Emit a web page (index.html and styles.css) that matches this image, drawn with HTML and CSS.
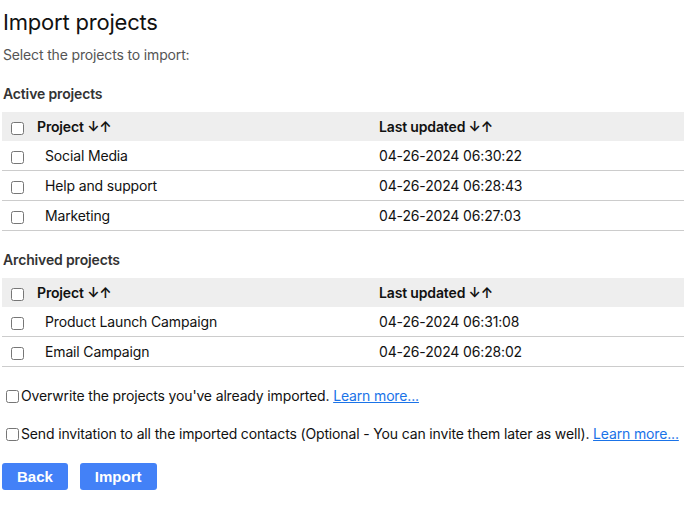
FILE: index.html
```html
<!DOCTYPE html>
<html lang="en">
<head>
    <meta charset="UTF-8">
    <title>Import projects</title>
    <link rel="stylesheet" href="styles.css">
</head>
<body>
    <h1>Import projects</h1>
    <p class="intro">Select the projects to import:</p>

    <h3>Active projects</h3>
    <table class="projects">
        <thead>
            <tr>
                <th class="check"><input type="checkbox"></th>
                <th class="name">Project ↓↑</th>
                <th class="date">Last updated ↓↑</th>
            </tr>
        </thead>
        <tbody>
            <tr><td class="check"><input type="checkbox"></td><td class="name">Social Media</td><td class="date">04-26-2024 06:30:22</td></tr>
            <tr><td class="check"><input type="checkbox"></td><td class="name">Help and support</td><td class="date">04-26-2024 06:28:43</td></tr>
            <tr><td class="check"><input type="checkbox"></td><td class="name">Marketing</td><td class="date">04-26-2024 06:27:03</td></tr>
        </tbody>
    </table>

    <h3>Archived projects</h3>
    <table class="projects">
        <thead>
            <tr>
                <th class="check"><input type="checkbox"></th>
                <th class="name">Project ↓↑</th>
                <th class="date">Last updated ↓↑</th>
            </tr>
        </thead>
        <tbody>
            <tr><td class="check"><input type="checkbox"></td><td class="name">Product Launch Campaign</td><td class="date">04-26-2024 06:31:08</td></tr>
            <tr><td class="check"><input type="checkbox"></td><td class="name">Email Campaign</td><td class="date">04-26-2024 06:28:02</td></tr>
        </tbody>
    </table>

    <label class="option"><input type="checkbox">Overwrite the projects you've already imported. <a href="#">Learn more...</a></label>
    <label class="option"><input type="checkbox">Send invitation to all the imported contacts (Optional - You can invite them later as well). <a href="#">Learn more...</a></label>

    <div class="actions">
        <button class="btn">Back</button>
        <button class="btn">Import</button>
    </div>
</body>
</html>
```

FILE: styles.css
```css
body {
    font-family: Inter, 'Noto Sans', sans-serif;
    font-size: 14px;
    letter-spacing: -0.15px;
    color: #111;
    margin: 0;
    padding: 8px 0 0 2px;
    background: #fff;
}

h1 {
    font-size: 22px;
    font-weight: 400;
    letter-spacing: -0.2px;
    margin: 0 0 0 1px;
    line-height: 28px;
}

.intro {
    color: #555;
    margin: 10px 0 0 1px;
    font-size: 14px;
    line-height: 18px;
}

h3 {
    font-size: 14px;
    font-weight: 600;
    color: #333;
    margin: 21px 0 0 1px;
    line-height: 18px;
}

.projects + h3 {
    margin-top: 20px;
}

.projects {
    width: 682px;
    border-collapse: collapse;
    margin-top: 9px;
}

.projects th {
    background: #eee;
    font-weight: 600;
    text-align: left;
    height: 29px;
    padding: 0;
}

.projects td {
    height: 29px;
    padding: 0;
    border-bottom: 1px solid #ccc;
}

.projects .check {
    width: 35px;
}

.projects input {
    margin: 0 0 0 9px;
    width: 13px;
    height: 13px;
    vertical-align: middle;
}

.projects td.name {
    padding-left: 8px;
}

.projects .date {
    width: 305px;
}

.option {
    display: block;
    margin-top: 22px;
    line-height: 16px;
    white-space: nowrap;
}

.projects + .option {
    margin-top: 21px;
}

.option input {
    margin: 0 2px 0 4px;
    width: 13px;
    height: 13px;
    vertical-align: -2px;
}

.option a {
    color: #1a73e8;
}

.actions {
    margin-top: 21px;
    display: flex;
    gap: 12px;
}

.btn {
    font-family: 'Liberation Sans', Arial, sans-serif;
    font-weight: 700;
    font-size: 15px;
    letter-spacing: 0;
    color: #fff;
    background: #4381f7;
    border: none;
    border-radius: 3px;
    height: 27px;
    padding: 0 15px;
}
```
